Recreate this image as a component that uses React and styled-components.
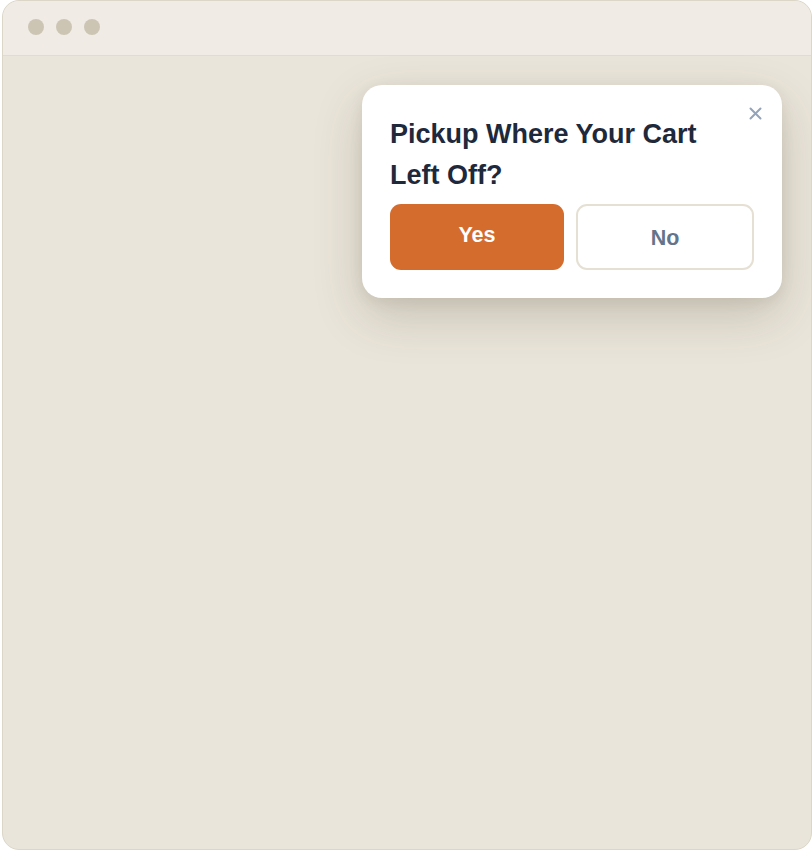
import React from 'react';
import styled, { createGlobalStyle } from 'styled-components';

const GlobalStyle = createGlobalStyle`
  html, body {
    margin: 0;
    padding: 0;
    background: #ffffff;
    font-family: "Liberation Sans", Arial, sans-serif;
  }
`;

const Window = styled.div`
  box-sizing: border-box;
  margin-left: 2px;
  width: 810px;
  height: 850px;
  border: 1px solid #dcd6c9;
  border-radius: 17px;
  overflow: hidden;
  display: flex;
  flex-direction: column;
  background: #eae5da;
`;

const TitleBar = styled.div`
  height: 55px;
  flex-shrink: 0;
  box-sizing: border-box;
  display: flex;
  align-items: center;
  gap: 12px;
  padding: 0 0 0 25px;
  background: #f0ece5;
  border-bottom: 1px solid #e2dccf;
`;

const Dot = styled.span`
  width: 16px;
  height: 16px;
  border-radius: 50%;
  background: #ccc5b4;
  margin-top: -3px;
`;

const Body = styled.div`
  position: relative;
  flex: 1;
`;

const Popup = styled.div`
  position: absolute;
  top: 29px;
  right: 29px;
  width: 420px;
  box-sizing: border-box;
  padding: 29px 28px 28px;
  background: #ffffff;
  border-radius: 20px;
  box-shadow: 0 18px 50px rgba(60, 50, 30, 0.2), 0 4px 14px rgba(60, 50, 30, 0.08);
`;

const Title = styled.h2`
  margin: 0 0 8px;
  font-size: 27px;
  line-height: 41px;
  font-weight: 700;
  color: #1e293b;
  padding-right: 20px;
`;

const Close = styled.button`
  position: absolute;
  top: 18px;
  right: 17px;
  width: 20px;
  height: 20px;
  padding: 0;
  border: none;
  background: none;
  display: flex;
  align-items: center;
  justify-content: center;
  cursor: pointer;
`;

const Actions = styled.div`
  display: flex;
  gap: 12px;
`;

const Button = styled.button`
  flex: ${(p) => (p.$primary ? '0 0 174px' : '1 1 0')};
  box-sizing: border-box;
  height: 66px;
  border-radius: 11px;
  font-family: "Liberation Sans", Arial, sans-serif;
  font-size: 21.5px;
  font-weight: 700;
  cursor: pointer;
  background: ${(p) => (p.$primary ? '#d46c2e' : '#ffffff')};
  color: ${(p) => (p.$primary ? '#ffffff' : '#64748b')};
  border: ${(p) => (p.$primary ? 'none' : '2px solid #e5e0d3')};
  padding: ${(p) => (p.$primary ? '0 0 3px' : '2px 0 0')};
  margin: 0;
`;

export default function App() {
  return (
    <>
      <GlobalStyle />
      <Window>
        <TitleBar>
          <Dot />
          <Dot />
          <Dot />
        </TitleBar>
        <Body>
          <Popup>
            <Close aria-label="Close">
              <svg width="13" height="13" viewBox="0 0 13 13">
                <path d="M1.5 1.5 L11.5 11.5 M11.5 1.5 L1.5 11.5" stroke="#94a3b8" strokeWidth="2" strokeLinecap="round" />
              </svg>
            </Close>
            <Title>Pickup Where Your Cart Left Off?</Title>
            <Actions>
              <Button $primary>Yes</Button>
              <Button>No</Button>
            </Actions>
          </Popup>
        </Body>
      </Window>
    </>
  );
}
